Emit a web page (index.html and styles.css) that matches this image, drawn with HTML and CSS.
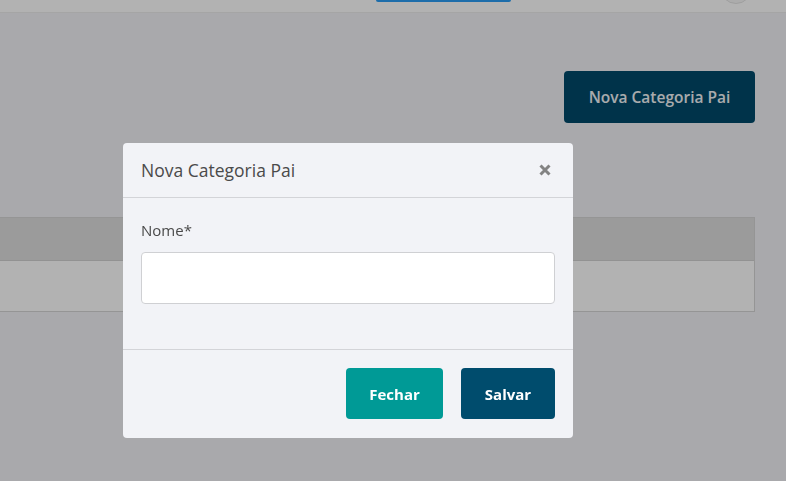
FILE: index.html
```html
<!DOCTYPE html>
<html lang="pt">
<head>
<meta charset="utf-8">
<title>Nova Categoria Pai</title>
<link rel="stylesheet" href="styles.css">
</head>
<body>
<div class="page">
  <header class="topbar">
    <div class="topbar-btn"></div>
    <div class="avatar"></div>
  </header>
  <main class="content">
    <div class="actions">
      <button class="btn-primary-page">Nova Categoria Pai</button>
    </div>
    <div class="table">
      <div class="table-head"></div>
      <div class="table-row"></div>
    </div>
  </main>
</div>
<div class="overlay"></div>
<div class="modal">
  <div class="modal-header">
    <h2 class="modal-title">Nova Categoria Pai</h2>
    <svg class="modal-close" width="12" height="12" viewBox="0 0 12 12" aria-label="Fechar">
      <path d="M1.5 1.5 L10.5 10.5 M10.5 1.5 L1.5 10.5" stroke="#838383" stroke-width="3" stroke-linecap="butt" fill="none"/>
    </svg>
  </div>
  <div class="modal-body">
    <label class="field-label">Nome*</label>
    <input class="field-input" type="text">
  </div>
  <div class="modal-footer">
    <button class="btn btn-teal">Fechar</button>
    <button class="btn btn-navy">Salvar</button>
  </div>
</div>
</body>
</html>
```
FILE: styles.css
```css
* { box-sizing: border-box; }
html, body { margin: 0; padding: 0; }
body {
  width: 786px;
  height: 481px;
  overflow: hidden;
  background: #f2f3f6;
  font-family: "Open Sans", "DejaVu Sans", sans-serif;
}
.page { width: 786px; height: 481px; }
.topbar {
  height: 13px;
  background: #ffffff;
  border-bottom: 1px solid #eceded;
  display: flex;
  align-items: flex-end;
  overflow: hidden;
}
.topbar-btn {
  width: 135px;
  height: 2px;
  margin-left: 376px;
  margin-bottom: 10px;
  background: #2a9df4;
  border-radius: 0 0 2px 2px;
}
.avatar {
  width: 32px;
  height: 32px;
  border-radius: 50%;
  border: 1px solid #e3e3e3;
  background: #f7f7f7;
  margin-left: 209px;
  margin-bottom: 8px;
}
.content { padding-top: 58px; }
.actions {
  display: flex;
  justify-content: flex-end;
  padding-right: 31px;
}
.btn-primary-page {
  width: 191px;
  height: 52px;
  border: 0;
  border-radius: 4px;
  background: #004a6b;
  color: #f2f5f8;
  font-family: inherit;
  font-size: 15.5px;
  font-weight: 600;
}
.table {
  margin-top: 94px;
  width: 755px;
  border: 1px solid #d6d6d6;
  border-left: 0;
}
.table-head {
  height: 43px;
  background: #dfdfdf;
  border-bottom: 1px solid #d2d2d2;
}
.table-row {
  height: 50px;
  background: #ffffff;
}
.overlay {
  position: fixed;
  inset: 0;
  background: rgba(0, 0, 0, 0.3);
}
.modal {
  position: absolute;
  left: 123px;
  top: 143px;
  width: 450px;
  background: #f2f3f7;
  border-radius: 4px;
  display: flex;
  flex-direction: column;
}
.modal-header {
  height: 55px;
  padding: 0 22px 0 18px;
  display: flex;
  align-items: center;
  justify-content: space-between;
  border-bottom: 1px solid #d3d4d8;
}
.modal-title {
  margin: 0;
  font-size: 17.5px;
  font-weight: 400;
  color: #4a4a4a;
}
.modal-close {
  display: block;
}
.modal-body {
  padding: 22px 18px 45px;
  display: flex;
  flex-direction: column;
  border-bottom: 1px solid #d3d4d8;
}
.field-label {
  font-size: 15px;
  color: #4a4a4a;
  line-height: 20px;
  margin-bottom: 12px;
}
.field-input {
  height: 52px;
  width: 100%;
  border: 1px solid #cfd0d3;
  border-radius: 4px;
  background: #ffffff;
  outline: none;
}
.modal-footer {
  padding: 18px 18px 19px;
  display: flex;
  justify-content: flex-end;
  gap: 18px;
}
.btn {
  height: 51px;
  border: 0;
  border-radius: 4px;
  color: #ffffff;
  font-family: inherit;
  font-size: 15px;
  font-weight: 700;
}
.btn-teal { width: 97px; background: #009a96; }
.btn-navy { width: 94px; background: #004c6d; }
```
